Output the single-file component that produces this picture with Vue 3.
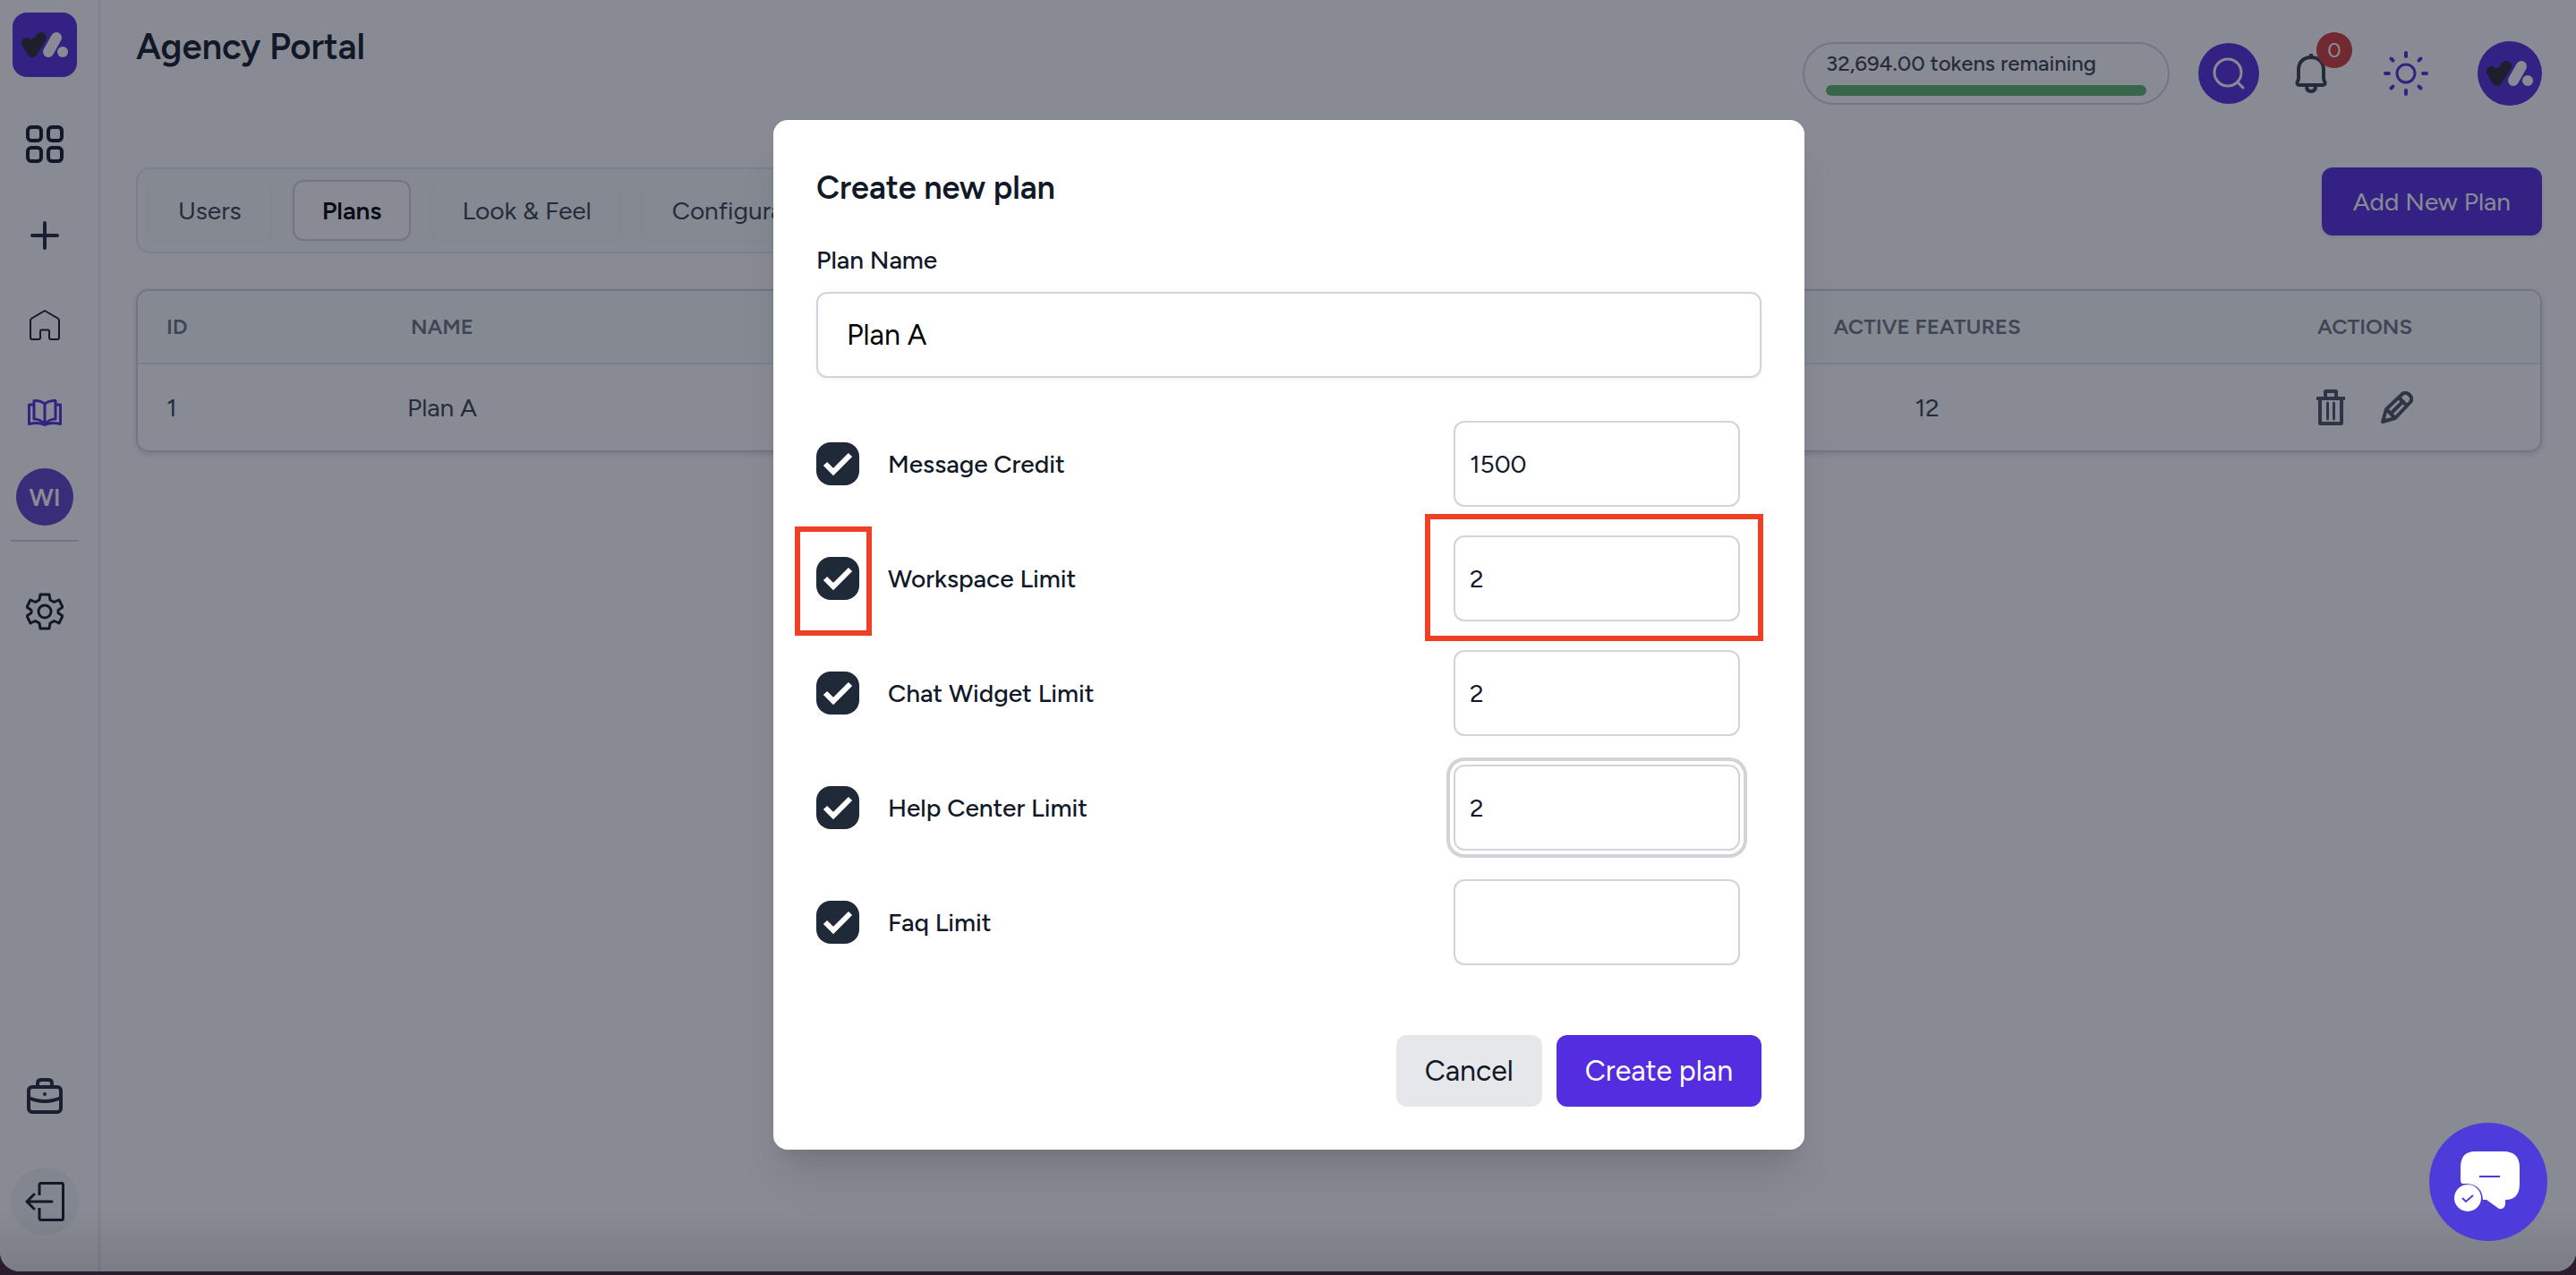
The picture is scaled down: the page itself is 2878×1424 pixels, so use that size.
<script setup>
import { ref } from 'vue'

const tabs = ['Users', 'Plans', 'Look & Feel', 'Configuration']
const activeTab = ref('Plans')
const planName = ref('Plan A')
const limits = ref([
  { id: 'message', label: 'Message Credit', value: '1500', enabled: true },
  { id: 'workspace', label: 'Workspace Limit', value: '2', enabled: true, marked: true },
  { id: 'widget', label: 'Chat Widget Limit', value: '2', enabled: true },
  { id: 'help', label: 'Help Center Limit', value: '2', enabled: true, ringed: true },
  { id: 'faq', label: 'Faq Limit', value: '', enabled: true },
])
</script>

<template>
  <div class="window">
    <aside class="sidebar">
      <a href="#" class="logo" aria-label="Home page">
        <svg width="72" height="72" viewBox="0 0 72 72" fill="none" stroke-linecap="round" stroke-linejoin="round">
          <path d="M16 34 22 44 32 28" stroke="#262830" stroke-width="12" />
          <path d="M18 36 23 32 26 40Z" fill="#262830" stroke="#262830" stroke-width="6" />
          <path d="M40 44 49 28" stroke="#fff" stroke-width="12" />
          <circle cx="56" cy="44" r="6" fill="#fff" />
        </svg>
      </a>
      <nav class="nav">
        <a href="#" class="nav-item grid-item" aria-label="Dashboard">
          <svg width="42" height="42" viewBox="0 0 42 42" fill="none" stroke="#111827" stroke-width="4">
            <rect x="2" y="2" width="15" height="15" rx="4" /><rect x="25" y="2" width="15" height="15" rx="4" />
            <rect x="2" y="25" width="15" height="15" rx="4" /><rect x="25" y="25" width="15" height="15" rx="4" />
          </svg>
        </a>
        <a href="#" class="nav-item plus-item" aria-label="Add">
          <svg width="32" height="32" viewBox="0 0 32 32" stroke="#1f2937" stroke-width="4" stroke-linecap="round"><path d="M2 16h28M16 2v28" /></svg>
        </a>
        <a href="#" class="nav-item home-item" aria-label="Home">
          <svg width="34" height="34" viewBox="0 0 34 34" fill="none" stroke="#111827" stroke-width="2" stroke-linejoin="round">
            <path d="M17 1 31.500 9.500Q33 10.500 33 12V31Q33 33 31 33H24Q22 33 22 31V24Q22 22.500 20.500 22.500H13.500Q12 22.500 12 24V31Q12 33 10 33H3Q1 33 1 31V12Q1 10.500 2.500 9.500Z" />
          </svg>
        </a>
        <a href="#" class="nav-item book-item" aria-label="Knowledge base">
          <svg width="38" height="30" viewBox="0 0 38 30" fill="none" stroke="#552de0" stroke-width="3" stroke-linejoin="round">
            <path d="M19 5Q14 1 7 1.500V22Q14 22 19 28 24 22 31 22V1.500Q24 1 19 5V28" />
            <path d="M7 6H1.500V27.500Q12 25 19 28.500 26 25 36.500 27.500V6H31" />
          </svg>
        </a>
        <a href="#" class="workspace">WI</a>
        <hr class="divider" />
        <a href="#" class="nav-item" aria-label="Settings">
          <svg width="42" height="42" viewBox="0 0 42 42" fill="none" stroke="#111827" stroke-width="3" stroke-linejoin="round">
            <path d="M16 2H26L27 8 31.500 10.500 37 8 41 16 36 19.500V22.500L41 26 37 34 31.500 31.500 27 34 26 40H16L15 34 10.500 31.500 5 34 1 26 6 22.500V19.500L1 16 5 8 10.500 10.500 15 8Z" />
            <circle cx="21" cy="21" r="7" />
          </svg>
        </a>
      </nav>
      <div class="sidebar-foot">
        <a href="#" class="nav-item" aria-label="Agency">
          <svg width="40" height="40" viewBox="0 0 40 40" fill="none" stroke="#1f2937" stroke-width="4" stroke-linejoin="round">
            <rect x="2" y="10" width="36" height="28" rx="4" />
            <path d="M12 9V6Q12 2 16 2H24Q28 2 28 6V9M2 22Q20 30 38 22" /><circle cx="20" cy="18" r="2" fill="#1f2937" stroke="none" />
          </svg>
        </a>
        <button class="logout" type="button" aria-label="Log out">
          <svg width="44" height="44" viewBox="0 0 44 44" fill="none" stroke="#111827" stroke-width="3">
            <path d="M16 15V3.500Q16 1.500 18 1.500H41Q42.500 1.500 42.500 3.500V40.500Q42.500 42.500 41 42.500H18Q16 42.500 16 40.500V29" />
            <path d="M30 22H2M10 14 2 22 10 30" stroke-linejoin="round" stroke-linecap="round" />
          </svg>
        </button>
      </div>
    </aside>

    <main class="content">
      <header class="topbar">
        <h1 class="page-title">Agency Portal</h1>
        <div class="tools">
          <div class="tokens">
            <span>32,694.00 tokens remaining</span>
            <div class="tokens-bar"></div>
          </div>
          <button class="search" type="button" aria-label="Search">
            <svg width="36" height="36" viewBox="0 0 36 36" fill="none" stroke="#fff" stroke-width="3" stroke-linecap="round"><circle cx="17" cy="17" r="15" /><path d="M28 28 34 34" /></svg>
          </button>
          <button class="bell" type="button" aria-label="Notifications">
            <svg width="36" height="44" viewBox="0 0 36 44" fill="none" stroke="#374151" stroke-width="4" stroke-linejoin="round">
              <path d="M18 4C9 4 4 10 4 18V27Q4 29 2.500 32Q2 35 5 35H31Q34 35 33.500 32Q32 29 32 27V18C32 10 27 4 18 4ZM18 0V4M13 36Q13 42 18 42T23 36" />
            </svg>
            <span class="badge">0</span>
          </button>
          <button class="theme" type="button" aria-label="Toggle theme">
            <svg width="50" height="50" viewBox="0 0 50 50" fill="none" stroke="#552de0" stroke-width="4" stroke-linecap="round">
              <circle cx="25" cy="25" r="10" stroke-width="3" />
              <path d="M25 2v4M25 44v4M2 25h4M44 25h4M8.500 8.500l2 2M39.500 39.500l2 2M8.500 41.500l2-2M39.500 10.500l2-2" />
            </svg>
          </button>
          <a href="#" class="avatar" aria-label="Account">
            <svg width="72" height="72" viewBox="0 0 72 72" fill="none" stroke-linecap="round" stroke-linejoin="round">
              <path d="M16 34 22 44 32 28" stroke="#262830" stroke-width="12" />
              <path d="M18 36 23 32 26 40Z" fill="#262830" stroke="#262830" stroke-width="6" />
              <path d="M40 44 49 28" stroke="#fff" stroke-width="12" />
              <circle cx="56" cy="44" r="6" fill="#fff" />
            </svg>
          </a>
        </div>
      </header>

      <div class="toolbar">
        <div class="tabs">
          <button v-for="tab in tabs" :key="tab" type="button" class="tab" :class="{ active: tab === activeTab }" @click="activeTab = tab">{{ tab }}</button>
        </div>
        <button class="add" type="button">Add New Plan</button>
      </div>

      <div class="table-card">
        <table>
          <colgroup><col class="c-id" /><col class="c-name" /><col /><col class="c-features" /><col class="c-actions" /></colgroup>
          <thead>
            <tr><th class="first">ID</th><th>NAME</th><th></th><th>ACTIVE FEATURES</th><th>ACTIONS</th></tr>
          </thead>
          <tbody>
            <tr>
              <td class="first">1</td><td>Plan A</td><td></td><td>12</td>
              <td>
                <div class="actions">
                  <button type="button" aria-label="Delete">
                    <svg width="32" height="40" viewBox="0 0 32 40" fill="none" stroke="#4b5563" stroke-width="4" stroke-linejoin="round"><path d="M0 10H32M4 10V38H28V10M10 9V2H22V9" /><path d="M12.500 15V33M19.500 15V33" stroke-width="3" stroke-linecap="round" /></svg>
                  </button>
                  <button type="button" aria-label="Edit">
                    <svg width="36" height="36" viewBox="0 0 36 36" fill="none" stroke="#4b5563" stroke-width="4" stroke-linejoin="round"><path d="M2 34 6 20 24 3Q28 0 32 4T33 12L16 30ZM6 20 16 30M20 7 29 16M11 25 25 11" /><path d="M1 35 3 28 8 33Z" fill="#4b5563" stroke="none" /></svg>
                  </button>
                </div>
              </td>
            </tr>
          </tbody>
        </table>
      </div>
    </main>

    <div class="overlay">
      <form class="modal" role="dialog" aria-labelledby="modal-title" @submit.prevent>
        <h2 id="modal-title">Create new plan</h2>
        <label class="name-label" for="plan-name">Plan Name</label>
        <input id="plan-name" v-model="planName" class="name-input" type="text" />
        <div class="limits">
          <div v-for="item in limits" :key="item.id" class="limit" :class="{ marked: item.marked }">
            <label class="limit-label">
              <span class="check">
                <input v-model="item.enabled" type="checkbox" />
                <svg width="48" height="48" viewBox="0 0 48 48" fill="none" stroke="#fff" stroke-width="6"><path d="M10 24 19 33 38 14" /></svg>
              </span>
              {{ item.label }}
            </label>
            <span class="field">
              <input v-model="item.value" type="text" :class="{ ringed: item.ringed }" :aria-label="item.label + ' value'" />
            </span>
          </div>
        </div>
        <div class="modal-actions">
          <button class="cancel" type="button">Cancel</button>
          <button class="create" type="submit">Create plan</button>
        </div>
      </form>
    </div>

    <button class="chat" type="button" aria-label="Open chat">
      <svg width="132" height="132" viewBox="0 0 132 132">
        <path d="M51 32H83Q101 32 101 50V68Q101 86 85 86V91Q84 97 78 96L64 86H60Q59 69 42 68H37Q35 67 35 64V50Q35 32 51 32Z" fill="#fff" />
        <path d="M56 60H79" stroke="#4d3cda" stroke-width="2" />
        <circle cx="43" cy="84" r="15" fill="#fff" />
        <path d="M37 84 41 88 49 81" fill="none" stroke="#4d3cda" stroke-width="2" />
      </svg>
    </button>
  </div>
</template>

<style>
body {
  background: #2a1d2d;
}
</style>

<style scoped>
* {
  box-sizing: border-box;
}
.window {
  position: relative;
  display: flex;
  height: calc(100vh - 4px);
  min-height: 1200px;
  overflow: hidden;
  border-radius: 0 0 22px 22px;
  background: #fff;
  color: #111827;
  font-family: Figtree, Lato, "Open Sans", sans-serif;
  font-size: 28px;
  line-height: 40px;
}
a {
  color: inherit;
  text-decoration: none;
}
button {
  margin: 0;
  padding: 0;
  border: 0;
  background: none;
  color: inherit;
  font: inherit;
}
svg {
  display: block;
}
h1,
h2 {
  margin: 0;
}
.sidebar {
  display: flex;
  flex: none;
  flex-direction: column;
  justify-content: space-between;
  width: 112px;
  padding: 14px 24px 40px 14px;
  border-right: 2px solid #e5e7eb;
}
.logo {
  overflow: hidden;
  width: 72px;
  height: 72px;
  border-radius: 16px;
  background: #552de0;
}
.nav {
  display: flex;
  flex: 1;
  flex-direction: column;
  align-items: center;
  padding-top: 54px;
}
.plus-item {
  margin-top: 65px;
}
.home-item {
  margin-top: 67px;
}
.book-item {
  margin-top: 66px;
}
.workspace {
  width: 64px;
  height: 64px;
  margin-top: 47px;
  border-radius: 50%;
  background: #6040c8;
  color: #fff;
  font-weight: 600;
  line-height: 64px;
  text-align: center;
}
.divider {
  width: 76px;
  height: 2px;
  margin: 16px 0 57px;
  border: 0;
  background: #d1d5db;
}
.sidebar-foot {
  display: flex;
  flex-direction: column;
  align-items: center;
  gap: 60px;
}
.logout {
  display: flex;
  align-items: center;
  justify-content: center;
  width: 76px;
  height: 76px;
  border-radius: 50%;
  background: #f3f4f6;
}
.content {
  flex: 1;
  min-width: 0;
  padding: 28px 38px 0 40px;
}
.topbar {
  display: flex;
  justify-content: space-between;
}
.page-title {
  font-size: 40px;
  font-weight: 600;
  line-height: 48px;
}
.tools {
  display: flex;
  align-items: center;
  padding-top: 18px;
}
.tokens {
  display: flex;
  flex-direction: column;
  gap: 8px;
  width: 410px;
  height: 70px;
  padding: 6px 24px;
  border: 2px solid #d1d5db;
  border-radius: 35px;
  color: #374151;
  font-size: 24px;
  font-weight: 500;
  line-height: 32px;
}
.tokens-bar {
  height: 12px;
  border-radius: 6px;
  background: #5cb46c;
}
.search {
  display: flex;
  align-items: center;
  justify-content: center;
  width: 68px;
  height: 68px;
  margin-left: 32px;
  border-radius: 50%;
  background: #552de0;
}
.bell {
  position: relative;
  margin-left: 40px;
}
.badge {
  position: absolute;
  top: -24px;
  right: -28px;
  width: 40px;
  height: 40px;
  border-radius: 50%;
  background: #d33a3a;
  color: #fff;
  font-size: 24px;
  text-align: center;
}
.theme {
  margin-left: 63px;
}
.avatar {
  width: 72px;
  height: 72px;
  margin-left: 55px;
  border-radius: 50%;
  background: #552de0;
}
.toolbar {
  display: flex;
  align-items: flex-start;
  justify-content: space-between;
  margin-top: 69px;
}
.tabs {
  display: flex;
  gap: 24px;
  padding: 12px;
  border: 2px solid #e5e7eb;
  border-radius: 16px;
  background: #f9fafb;
}
.tab {
  height: 68px;
  padding: 0 31px;
  border: 2px solid #f7f8fa;
  border-radius: 12px;
  background: #f9fafb;
  box-shadow: 0 2px 4px rgba(0, 0, 0, 0.03);
  color: #374151;
}
.tab.active {
  border-color: #d1d5db;
  background: #fff;
  color: #000;
  font-weight: 600;
}
.add {
  height: 76px;
  padding: 0 35px;
  border-radius: 12px;
  background: #552de0;
  box-shadow: 0 2px 4px rgba(0, 0, 0, 0.1);
  color: #fff;
}
.table-card {
  overflow: hidden;
  margin-top: 40px;
  border: 2px solid #d1d5db;
  border-radius: 14px;
  box-shadow: 0 2px 6px rgba(0, 0, 0, 0.15);
}
table {
  width: 100%;
  border-collapse: separate;
  border-spacing: 0;
  table-layout: fixed;
}
.c-id {
  width: 98px;
}
.c-name {
  width: 484px;
}
.c-features {
  width: 586px;
}
.c-actions {
  width: 392px;
}
th {
  height: 82px;
  padding: 0;
  border-bottom: 2px solid #e5e7eb;
  background: #f9fafb;
  color: #6b7280;
  font-size: 24px;
  font-weight: 600;
}
td {
  height: 96px;
  padding: 0;
  color: #374151;
  text-align: center;
}
.first {
  padding-left: 32px;
  text-align: left;
}
.actions {
  display: flex;
  align-items: center;
  justify-content: center;
  gap: 40px;
}
.overlay {
  position: absolute;
  inset: 0;
  display: flex;
  align-items: center;
  justify-content: center;
  padding: 0 0 2px 2px;
  background: linear-gradient(to top, rgba(0, 0, 0, 0.1), transparent 70px), rgba(17, 24, 39, 0.5);
}
.modal {
  width: 1152px;
  max-width: 100%;
  padding: 48px;
  border-radius: 16px;
  background: #fff;
  box-shadow: 0 40px 50px -10px rgba(0, 0, 0, 0.1), 0 16px 20px -12px rgba(0, 0, 0, 0.1);
}
.modal h2 {
  margin-bottom: 30px;
  font-size: 36px;
  font-weight: 600;
  line-height: 56px;
}
.name-label {
  display: block;
  margin-bottom: 14px;
  font-weight: 500;
  line-height: 44px;
}
input {
  border: 2px solid #d1d5db;
  border-radius: 12px;
  outline: 0;
  background: #fff;
  color: #111827;
  font: inherit;
}
.name-input {
  width: 100%;
  height: 96px;
  padding: 0 32px;
  box-shadow: 0 2px 4px rgba(0, 0, 0, 0.05);
  color: #000;
  font-size: 32px;
}
.limits {
  display: flex;
  flex-direction: column;
  gap: 32px;
  margin-top: 48px;
}
.limit {
  position: relative;
  display: flex;
  align-items: center;
  justify-content: space-between;
  padding-right: 24px;
}
.limit-label {
  display: flex;
  align-items: center;
  gap: 32px;
  font-weight: 500;
}
.check {
  position: relative;
  width: 48px;
  height: 48px;
}
.check input {
  display: block;
  width: 48px;
  height: 48px;
  margin: 0;
  border: 0;
  border-radius: 16px;
  background: #1f2937;
  appearance: none;
}
.check svg {
  position: absolute;
  inset: 0;
  pointer-events: none;
}
.field input {
  display: block;
  width: 320px;
  height: 96px;
  padding: 0 16px;
}
.field .ringed {
  box-shadow: 0 0 0 4px #fff, 0 0 0 8px #d2d3d6;
}
.marked .check::after,
.marked .field::after {
  position: absolute;
  border: 6px solid #ed4025;
  content: "";
}
.marked .check::after {
  inset: -34px -14px -40px -24px;
}
.marked .field::after {
  top: -24px;
  right: -2px;
  bottom: -22px;
  width: 366px;
}
.modal-actions {
  display: flex;
  justify-content: flex-end;
  gap: 16px;
  margin-top: 78px;
  font-size: 32px;
}
.modal-actions button {
  height: 80px;
  padding: 0 32px;
  border-radius: 12px;
}
.cancel {
  background: #e5e7eb;
}
.create {
  background: #552de0;
  color: #fff;
}
.chat {
  position: absolute;
  right: 32px;
  bottom: 34px;
  border-radius: 50%;
  background: #4d3cda;
}
</style>
